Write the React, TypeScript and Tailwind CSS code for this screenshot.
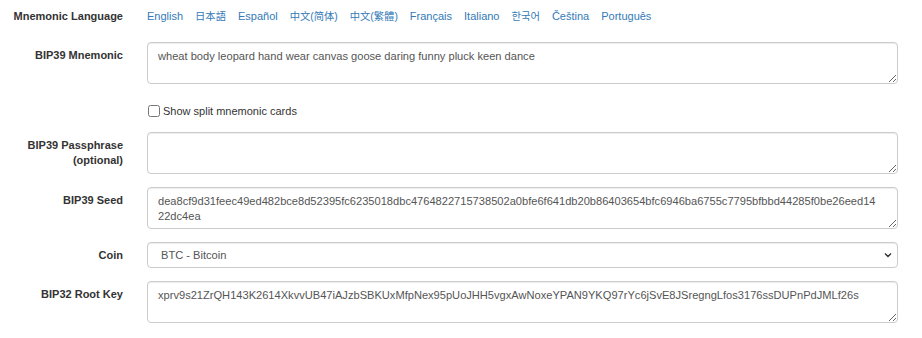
import React from "react";

const font = { fontFamily: '"Liberation Sans", Arial, "Noto Sans CJK SC", "Noto Sans CJK JP", "Noto Sans CJK KR", sans-serif' };

const langs: [string, boolean][] = [
  ["English", false],
  ["日本語", true],
  ["Español", false],
  ["中文(简体)", true],
  ["中文(繁體)", true],
  ["Français", false],
  ["Italiano", false],
  ["한국어", true],
  ["Čeština", false],
  ["Português", false],
];

function Label({ children }: { children: React.ReactNode }) {
  return (
    <div className="w-[123px] shrink-0 text-right font-bold text-[11px] leading-[15px] text-[#333] pt-[6px]">
      {children}
    </div>
  );
}

const taCls =
  "block w-full h-[42px] rounded-[4px] border border-[#ccc] bg-white pl-[10px] pr-[18px] pt-[6px] text-[11.1px] leading-[15px] text-[#555] shadow-[inset_0_1px_1px_rgba(0,0,0,0.075)] resize-y outline-none break-all";

export default function App() {
  return (
    <div className="w-[922px] h-[338px] bg-white overflow-hidden" style={font}>
      <div className="flex flex-col pr-[24px]">
        <div className="flex gap-[24px] items-center mt-[9px] h-[15px]">
          <div className="w-[123px] shrink-0 text-right font-bold text-[11px] leading-[15px] text-[#333]">Mnemonic Language</div>
          <div className="flex items-center gap-[12px] text-[11px] leading-[15px] text-[#337ab7]">
            {langs.map(([l, cjk]) => (
              <a key={l} href="#" className={cjk ? "text-[#337ab7] text-[10.3px]" : "text-[#337ab7]"}>{l}</a>
            ))}
          </div>
        </div>

        <div className="flex gap-[24px] mt-[18px]">
          <Label>BIP39 Mnemonic</Label>
          <textarea className={taCls} defaultValue="wheat body leopard hand wear canvas goose daring funny pluck keen dance" />
        </div>

        <div className="flex gap-[24px] mt-[20px] h-[14px] items-center">
          <div className="w-[123px] shrink-0" />
          <label className="flex items-center gap-[3px] text-[11px] leading-[14px] text-[#333]">
            <input type="checkbox" className="w-[12px] h-[12px] m-0 ml-[1px]" />
            <span>Show split mnemonic cards</span>
          </label>
        </div>

        <div className="flex gap-[24px] mt-[14px]">
          <Label>BIP39 Passphrase<br />(optional)</Label>
          <textarea className={taCls} defaultValue="" />
        </div>

        <div className="flex gap-[24px] mt-[13px]">
          <Label>BIP39 Seed</Label>
          <textarea
            className={taCls}
            defaultValue="dea8cf9d31feec49ed482bce8d52395fc6235018dbc4764822715738502a0bfe6f641db20b86403654bfc6946ba6755c7795bfbbd44285f0be26eed1422dc4ea"
          />
        </div>

        <div className="flex gap-[24px] mt-[13px]">
          <Label>Coin</Label>
          <div className="relative w-full">
            <select className="block w-full h-[26px] appearance-none rounded-[4px] border border-[#ccc] bg-white pl-[13px] text-[11.1px] text-[#555] shadow-[inset_0_1px_1px_rgba(0,0,0,0.075)] outline-none">
              <option>BTC - Bitcoin</option>
            </select>
            <svg className="absolute right-[6px] top-[10px] pointer-events-none" width="8" height="6" viewBox="0 0 8 6">
              <path d="M1 1.5 L4 4.5 L7 1.5" fill="none" stroke="#333" strokeWidth="1.4" />
            </svg>
          </div>
        </div>

        <div className="flex gap-[24px] mt-[13px]">
          <Label>BIP32 Root Key</Label>
          <textarea
            className={taCls}
            defaultValue="xprv9s21ZrQH143K2614XkvvUB47iAJzbSBKUxMfpNex95pUoJHH5vgxAwNoxeYPAN9YKQ97rYc6jSvE8JSregngLfos3176ssDUPnPdJMLf26s"
          />
        </div>
      </div>
    </div>
  );
}
